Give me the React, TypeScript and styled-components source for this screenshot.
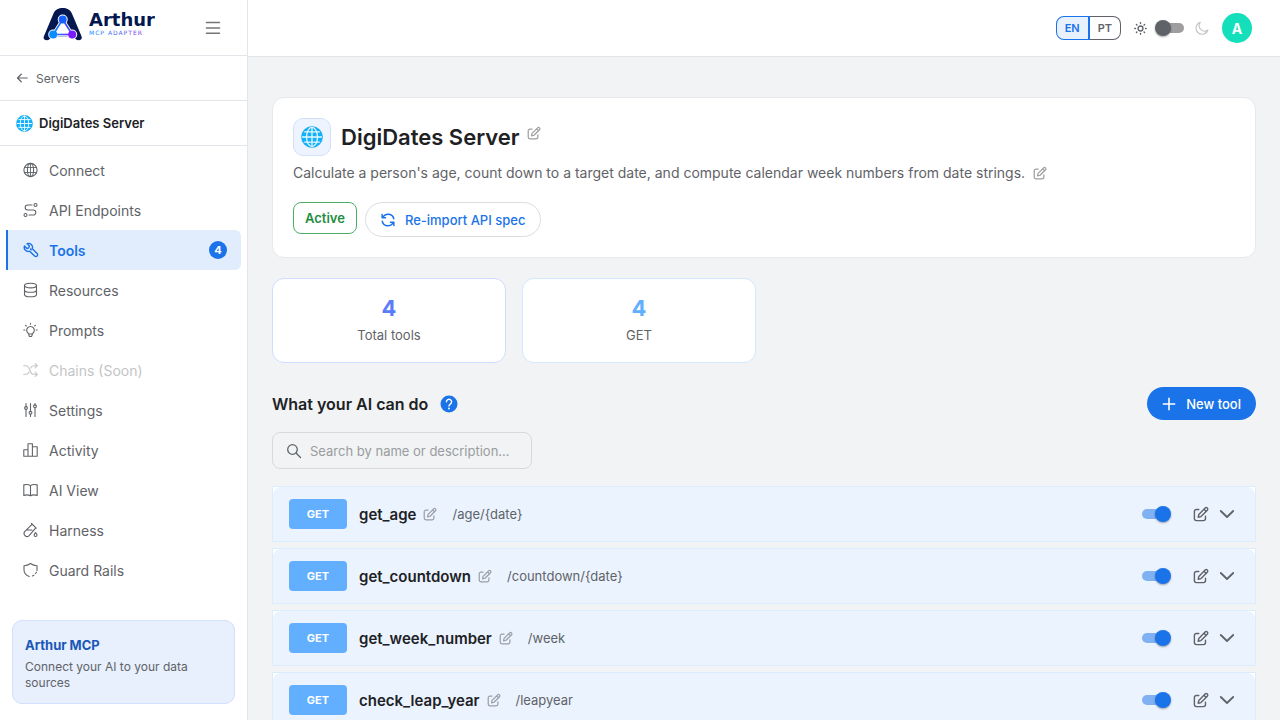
import React, { useState } from "react";
import styled, { createGlobalStyle, css } from "styled-components";

const GlobalStyle = createGlobalStyle`
  *, *::before, *::after { box-sizing: border-box; }
  body {
    margin: 0;
    background: #f1f3f4;
    color: #202124;
    font-family: Inter, "Liberation Sans", sans-serif;
    font-size: 14px;
  }
  h1, h2, p, ul { margin: 0; padding: 0; }
  ul { list-style: none; }
  button, input { font-family: inherit; }
  button { cursor: pointer; }
`;

/* ---------- icons ---------- */

type IconProps = { size?: number; stroke?: number; children?: React.ReactNode };

const Glyph = styled.svg`
  display: block;
  flex: none;
  fill: none;
  stroke: currentColor;
  stroke-linecap: round;
  stroke-linejoin: round;
`;

const Icon = ({ size = 16, stroke = 1.1, children }: IconProps) => (
  <Glyph width={size} height={size} viewBox="0 0 16 16" strokeWidth={stroke} aria-hidden="true">
    {children}
  </Glyph>
);

const ConnectIcon = () => (
  <Icon>
    <circle cx="7.500" cy="8" r="6.600" />
    <ellipse cx="7.500" cy="8" rx="3.100" ry="6.600" />
    <path d="M7.500 1.400v13.200M1.600 5.500h11.800M1.600 10.500h11.800" strokeWidth="0.900" />
  </Icon>
);
const EndpointsIcon = () => (
  <Icon>
    <circle cx="12.500" cy="3" r="1.500" />
    <circle cx="2.500" cy="13" r="1.500" />
    <path d="M9 3H4.700a2.500 2.500 0 0 0 0 5h5.600a2.500 2.500 0 0 1 0 5H6" />
  </Icon>
);
const ToolsIcon = () => (
  <Icon stroke={1.400}>
    <path d="M9.300 6.700a4 4 0 0 0-5.200-5L6.400 4 5.800 5.900 3.900 6.500 1.500 4.100a4 4 0 0 0 5.200 5.100l4.900 4.900a1.750 1.750 0 0 0 2.500-2.500Z" />
    <path d="m7.500 7 .800.800" />
  </Icon>
);
const ResourcesIcon = () => (
  <Icon>
    <ellipse cx="7.500" cy="3.600" rx="6" ry="2.300" />
    <path d="M1.500 3.600v8.800c0 1.300 2.700 2.300 6 2.300s6-1 6-2.300V3.600M1.500 8c0 1.300 2.700 2.300 6 2.300s6-1 6-2.300" />
  </Icon>
);
const PromptsIcon = () => (
  <Icon>
    <path d="M5.800 11.700A3.800 3.800 0 1 1 9.200 11.700V13l-.7 1.500h-2L5.800 13ZM6 12h3" />
    <path d="M7.500 1.200v1M.8 8h1M13.200 8h1M2.600 3.300l.7.700M12.400 3.300l-.7.700" />
  </Icon>
);
const ChainsIcon = () => (
  <Icon>
    <path d="M.7 3.700H3c4.500 0 3 8.600 7.500 8.600h3.800M.7 12.300H3c1.700 0 2.600-1 3.200-2.300M7.600 6c.6-1.300 1.500-2.300 3.200-2.300h3.500M12.200 1.600l2.100 2.100-2.100 2.100M12.200 10.200l2.100 2.100-2.100 2.100" />
  </Icon>
);
const SettingsIcon = () => (
  <Icon>
    <circle cx="3" cy="6" r="1.400" />
    <circle cx="7.500" cy="10.800" r="1.400" />
    <circle cx="12" cy="4.300" r="1.400" />
    <path d="M3 1.500v3.100M3 7.400v7M7.500 1.500v7.900M7.500 12.200v2.200M12 1.500v1.400M12 5.700v8.700" />
  </Icon>
);
const ActivityIcon = () => (
  <Icon>
    <path d="M.8 14.200V7.700h4.200v6.500ZM5 14.200V1.800h4.400v12.400ZM9.400 4.800h4.800v9.400H5" />
  </Icon>
);
const BookIcon = () => (
  <Icon>
    <path d="M7.500 3.700C5.700 2.200 3.300 2.200.8 2.900v10.500c2.500-.7 4.900-.7 6.700.5 1.800-1.200 4.200-1.200 6.700-.5V2.900c-2.500-.7-4.900-.7-6.700.8ZM7.500 3.700v10" />
  </Icon>
);
const HarnessIcon = () => (
  <Icon>
    <path d="m8.500 1.500 4.700 4.700M9.200 2.200 1.700 9.700a3 3 0 0 0 4.200 4.200l6.900-8M4 8h5" />
    <path d="M12.500 10.600c1 1.300 1.500 1.800 1.500 2.500a1.450 1.450 0 0 1-2.900 0c0-.7.500-1.200 1.400-2.500Z" />
  </Icon>
);
const ShieldIcon = () => (
  <Icon>
    <path d="M14 8.500V3.700C11.800 3.700 9.500 3 7.500 1.500 5.500 3 3.200 3.700 1 3.700v4.100c0 3.600 2.300 5.700 5.200 6.800M9.500 14l1.500-.9M12.500 11.500l.9-1.300" />
  </Icon>
);
const BackIcon = () => (
  <Icon size={12} stroke={1.600}>
    <path d="M15 8H2M7 3 2 8l5 5" />
  </Icon>
);
const MenuIcon = () => (
  <Icon stroke={1.600}>
    <path d="M1.500 2.500h13M1.500 8h13M1.500 13.200h13" />
  </Icon>
);
const EditIcon = ({ size = 14, stroke = 1.400 }: IconProps) => (
  <Icon size={size} stroke={stroke}>
    <path d="M5.800 3.500H3.400a2 2 0 0 0-2 2v7.100a2 2 0 0 0 2 2h7.100a2 2 0 0 0 2-2v-2.400" />
    <path d="m5.800 8.500 6.300-6.400a1.550 1.550 0 0 1 2.200 2.200L8 10.600l-2.800.6ZM11 3.300l2.200 2.200" />
  </Icon>
);
const SyncIcon = () => (
  <Icon size={14} stroke={1.700}>
    <path d="M14.600 6.500A6.700 6.700 0 0 0 2.900 3.800L1.300 5.500M1.300 1.600v3.900h3.900M1.400 9.500a6.700 6.700 0 0 0 11.700 2.700l1.600-1.700M14.700 14.400v-3.900h-3.900" />
  </Icon>
);
const SunIcon = () => (
  <Icon size={13} stroke={1.700}>
    <circle cx="8" cy="8" r="3" />
    <path d="M8 1v.8M8 14.200v.8M1 8h.8M14.200 8h.8M3 3l.6.600M12.400 12.400l.6.600M13 3l-.6.600M3.600 12.400l-.6.600" />
  </Icon>
);
const MoonIcon = () => (
  <Icon size={14} stroke={1.300}>
    <path d="M6 1.500a7 7 0 1 0 8.800 8.800A6.300 6.300 0 0 1 6 1.500Z" />
  </Icon>
);
const PlusIcon = () => (
  <Icon size={14} stroke={1.800}>
    <path d="M8 1.500v13M1.500 8h13" />
  </Icon>
);
const SearchIcon = () => (
  <Icon stroke={1.300}>
    <circle cx="6.500" cy="6.500" r="4.800" />
    <path d="m10.200 10.200 4.300 4.300" />
  </Icon>
);
const ChevronIcon = () => (
  <Icon stroke={1.800}>
    <path d="m1.800 5 6.200 6 6.200-6" />
  </Icon>
);
const HelpIcon = () => (
  <Glyph width="18" height="18" viewBox="0 0 18 18" aria-hidden="true">
    <circle cx="9" cy="9" r="8.500" fill="#1a73e8" stroke="none" />
    <path d="M6.400 6.800a2.600 2.600 0 1 1 3.900 2.300C9.400 9.700 9 10 9 11" stroke="#fff" strokeWidth="1.400" />
    <circle cx="9" cy="13.500" r="0.900" fill="#fff" stroke="none" />
  </Glyph>
);
const GlobeBadge = ({ size }: { size: number }) => (
  <Glyph width={size} height={size} viewBox="0 0 24 24" strokeWidth="1.400" aria-hidden="true">
    <circle cx="12" cy="12" r="11.500" fill="#12b0f8" stroke="#12a6f0" strokeWidth="0.600" />
    <g stroke="#e6f7ff">
      <ellipse cx="12" cy="12" rx="6" ry="10.500" />
      <path d="M12 1.500v21M1.500 12h21M4 6.500h16M4 17.500h16" />
    </g>
  </Glyph>
);

const BrandLogo = () => (
  <svg width="112" height="34" viewBox="0 0 112 34" role="img" aria-label="Arthur MCP Adapter">
    <defs>
      <linearGradient id="tagline" x1="0" x2="1" y1="0" y2="0">
        <stop offset="0" stopColor="#1496ff" />
        <stop offset="1" stopColor="#7a3cf0" />
      </linearGradient>
      <linearGradient id="base" x1="0" x2="1" y1="0" y2="0">
        <stop offset="0" stopColor="#0a8cff" />
        <stop offset="1" stopColor="#7a1cff" />
      </linearGradient>
    </defs>
    <path
      d="M1 29 10.500 6.500C12.500 2.300 15.500 1 19.700 1s7.200 1.300 9.200 5.500L38.400 29c1.200 3-.4 4.200-2.600 4.200-2.300 0-3.200-.8-4.600-3.200H8.200c-1.400 2.400-2.300 3.200-4.600 3.200C1.400 33.200-.2 32 1 29Z"
      fill="#04174f"
    />
    <path d="M19.700 13.500 11 27.500h17.400Z" fill="#fff" stroke="#fff" strokeWidth="4.500" strokeLinejoin="round" />
    <circle cx="19.700" cy="12.500" r="5" fill="#fff" />
    <circle cx="10.200" cy="27.500" r="5" fill="#fff" />
    <circle cx="29.200" cy="27.500" r="5" fill="#fff" />
    <path d="M10 30h19.400v4H10Z" fill="#fff" />
    <path d="M19.700 12.500 10.200 27.500" stroke="#1477ff" strokeWidth="1.600" />
    <path d="m19.700 12.500 9.500 15" stroke="#3a4cff" strokeWidth="1.600" />
    <rect x="10" y="26.700" width="19" height="1.600" fill="url(#base)" />
    <circle cx="19.700" cy="12.500" r="4" fill="#1560ff" />
    <circle cx="10.200" cy="27.500" r="4" fill="#0a8cff" />
    <circle cx="29.200" cy="27.500" r="4" fill="#7a1cff" />
    <text x="46" y="19" fontFamily="'DejaVu Sans', sans-serif" fontWeight="700" fontSize="18" fill="#04174f">
      Arthur
    </text>
    <text x="46" y="28" fontFamily="'DejaVu Sans', sans-serif" fontSize="6" letterSpacing="1" fill="url(#tagline)">
      MCP ADAPTER
    </text>
  </svg>
);

/* ---------- shared controls ---------- */

const IconButton = styled.button<{ $tone?: string }>`
  display: flex;
  align-items: center;
  justify-content: center;
  padding: 0;
  border: 0;
  background: none;
  color: ${(p) => p.$tone ?? "#5f6368"};
`;

const Switch = styled.input`
  appearance: none;
  display: flex;
  align-items: center;
  flex: none;
  width: 27px;
  height: 10px;
  margin: 0 0 0 2px;
  cursor: pointer;
  border-radius: 5px;
  background: #9e9e9e;

  &::before {
    content: "";
    flex: none;
    width: 16px;
    height: 16px;
    margin: -3px -2px;
    border-radius: 50%;
    background: #5f6368;
    box-shadow: 0 1px 2px rgba(0, 0, 0, 0.35);
  }
  &:checked {
    justify-content: flex-end;
    margin: 0 2px 0 0;
    background: #80b1f3;
  }
  &:checked::before {
    background: #1a73e8;
  }
`;

/* ---------- shell ---------- */

const Shell = styled.div`
  display: grid;
  grid-template-columns: 248px minmax(0, 1fr);
  height: 100vh;
`;

const Sidebar = styled.aside`
  display: flex;
  flex-direction: column;
  min-height: 0;
  background: #fff;
  border-right: 1px solid #e3e5ea;
`;

const SideRow = styled.div<{ $height: number }>`
  display: flex;
  align-items: center;
  flex: none;
  height: ${(p) => p.$height}px;
  padding: 0 16px;
  border-bottom: 1px solid #e3e5ea;
`;

const Brand = styled(SideRow)`
  justify-content: space-between;
  padding: 0 26px 8px 43px;

  button { margin-top: 8px; }
`;

const BackLink = styled.a`
  display: flex;
  align-items: center;
  gap: 8px;
  color: #5f6368;
  font-size: 12px;
  text-decoration: none;
`;

const ServerName = styled(SideRow)`
  gap: 6px;
  font-size: 13px;
  font-weight: 600;
`;

const NavList = styled.ul`
  flex: 1;
  padding: 4px 6px;
`;

const NavLink = styled.a<{ $active?: boolean; $disabled?: boolean }>`
  display: flex;
  align-items: center;
  gap: 10px;
  height: 40px;
  padding: 0 14px 0 15px;
  border-left: 2px solid transparent;
  border-radius: 0 6px 6px 0;
  color: #5f6368;
  text-decoration: none;
  ${(p) => p.$disabled && css`color: #c3c5c7;`}
  ${(p) => p.$active && css`
    color: #1a73e8;
    font-weight: 600;
    background: #e1edfc;
    border-left-color: #1a73e8;
  `}
`;

const Count = styled.span`
  display: grid;
  place-items: center;
  width: 18px;
  height: 18px;
  margin-left: auto;
  border-radius: 50%;
  background: #1a73e8;
  color: #fff;
  font-size: 11px;
  font-weight: 700;
`;

const Promo = styled.section`
  margin: 0 12px 16px;
  padding: 15px 12px 12px;
  border: 1px solid #d2e0fd;
  border-radius: 10px;
  background: #e8effd;
  color: #5f6368;
  font-size: 12px;
  line-height: 16px;

  h2 {
    margin-bottom: 5px;
    color: #1a56b8;
    font-size: 13px;
    line-height: 18px;
    font-weight: 700;
  }
`;

const Content = styled.div`
  display: flex;
  flex-direction: column;
  min-width: 0;
  min-height: 0;
`;

const TopBar = styled.header`
  display: flex;
  align-items: center;
  justify-content: flex-end;
  flex: none;
  height: 57px;
  padding: 0 28px;
  background: #fff;
  border-bottom: 1px solid #e3e5ea;
`;

const LangGroup = styled.div`
  display: flex;
  margin-right: 13px;
`;

const LangButton = styled.button<{ $selected?: boolean }>`
  height: 24px;
  padding: 0 8px;
  border: 1px solid #5f6368;
  border-left-width: 0;
  border-radius: 0 8px 8px 0;
  background: #fff;
  color: #5f6368;
  font-size: 11px;
  font-weight: 600;
  ${(p) => p.$selected && css`
    border: 1px solid #1a73e8;
    border-right-width: 2px;
    border-radius: 8px 0 0 8px;
    background: #e8f1fe;
    color: #1a73e8;
  `}
`;

const ThemePicker = styled.div`
  display: flex;
  align-items: center;
  gap: 8px;
  margin-right: 13px;
  color: #5f6368;

  > :last-child { color: #c3c5c7; margin-left: 3px; }
`;

const Avatar = styled.button`
  width: 30px;
  height: 30px;
  padding: 0;
  border: 0;
  border-radius: 50%;
  background: #14dfbb;
  color: #fff;
  font-size: 14px;
  font-weight: 700;
`;

const Main = styled.main`
  flex: 1;
  min-height: 0;
  padding: 40px 24px 24px;
  overflow-y: auto;
  scrollbar-width: none;
`;

/* ---------- server summary ---------- */

const Summary = styled.section`
  padding: 20px;
  border: 1px solid #e6e8eb;
  border-radius: 12px;
  background: #fff;
`;

const TitleRow = styled.div`
  display: flex;
  align-items: center;
  gap: 10px;

  h1 {
    font-size: 22px;
    line-height: 30px;
    font-weight: 600;
  }
  button { align-self: flex-start; margin: 8px 0 0 -3px; }
`;

const ServerMark = styled.div`
  display: grid;
  place-items: center;
  width: 38px;
  height: 38px;
  border: 1px solid #d3e0fd;
  border-radius: 10px;
  background: #edf3ff;
`;

const Description = styled.div`
  display: flex;
  align-items: center;
  gap: 8px;
  margin: 5px 0 17px;
  color: #5f6368;
  font-size: 14px;
  line-height: 24px;
`;

const Actions = styled.div`
  display: flex;
  align-items: flex-start;
  gap: 8px;
`;

const StatusButton = styled.button`
  height: 32px;
  padding: 0 11px;
  border: 1px solid #4caf68;
  border-radius: 8px;
  background: #fff;
  color: #1e8e3e;
  font-size: 13px;
  font-weight: 600;
`;

const PillButton = styled.button<{ $primary?: boolean }>`
  display: flex;
  align-items: center;
  gap: 10px;
  height: ${(p) => (p.$primary ? 33 : 35)}px;
  padding: 0 15px;
  border: ${(p) => (p.$primary ? "0" : "1px solid #dadce0")};
  border-radius: 18px;
  background: ${(p) => (p.$primary ? "#1a73e8" : "#fff")};
  color: ${(p) => (p.$primary ? "#fff" : "#1a73e8")};
  font-size: 13px;
  font-weight: 500;
`;

/* ---------- stats ---------- */

const Stats = styled.div`
  display: grid;
  grid-template-columns: repeat(4, minmax(0, 1fr));
  gap: 16px;
  margin: 20px 0 24px;
`;

const Stat = styled.div<{ $line: string; $ink: string }>`
  padding: 14px 16px 16px;
  border: 1px solid ${(p) => p.$line};
  border-radius: 12px;
  background: #fff;
  color: #5f6368;
  font-size: 13px;
  line-height: 22px;
  text-align: center;

  strong {
    display: block;
    color: ${(p) => p.$ink};
    font-size: 22px;
    line-height: 31px;
    font-weight: 700;
  }
`;

/* ---------- tools ---------- */

const SectionHead = styled.div`
  display: flex;
  align-items: center;
  gap: 12px;

  h2 {
    font-size: 16px;
    font-weight: 600;
  }
  > :last-child { margin-left: auto; }
`;

const SearchBox = styled.label`
  display: flex;
  align-items: center;
  gap: 8px;
  width: 260px;
  height: 37px;
  margin: 12px 0 17px;
  padding: 0 12px 0 13px;
  border: 1px solid #d7d9dc;
  border-radius: 8px;
  color: #5f6368;

  input {
    flex: 1;
    min-width: 0;
    padding: 0;
    border: 0;
    outline: 0;
    background: none;
    color: #202124;
    font-size: 13px;
    text-overflow: ellipsis;
  }
  input::placeholder { color: #9a9c9f; opacity: 1; }
`;

const ToolList = styled.ul`
  display: grid;
  gap: 6px;
`;

const ToolFrame = styled.li`
  border: 1px solid #dcecff;
  background: #fff;
`;

const ToolRow = styled.div`
  display: flex;
  align-items: center;
  height: 54px;
  padding: 0 20px 0 16px;
  border-radius: 8px 8px 0 0;
  background: #ebf3ff;
`;

const Method = styled.span`
  display: grid;
  place-items: center;
  width: 58px;
  height: 30px;
  margin-right: 12px;
  border-radius: 4px;
  background: #61affe;
  color: #fff;
  font-size: 11px;
  font-weight: 700;
`;

const ToolName = styled.span`
  margin-right: 7px;
  font-size: 15px;
  font-weight: 600;
`;

const ToolPath = styled.span`
  margin-left: 15px;
  color: #5f6368;
  font-size: 13px;
`;

const RowControls = styled.div`
  display: flex;
  align-items: center;
  gap: 10px;
  margin-left: auto;

  input:checked { margin-right: 14px; }
  input:not(:checked) { margin-right: 12px; }
`;

const navItems = [
  { label: "Connect", icon: <ConnectIcon /> },
  { label: "API Endpoints", icon: <EndpointsIcon /> },
  { label: "Tools", icon: <ToolsIcon />, active: true, count: 4 },
  { label: "Resources", icon: <ResourcesIcon /> },
  { label: "Prompts", icon: <PromptsIcon /> },
  { label: "Chains (Soon)", icon: <ChainsIcon />, disabled: true },
  { label: "Settings", icon: <SettingsIcon /> },
  { label: "Activity", icon: <ActivityIcon /> },
  { label: "AI View", icon: <BookIcon /> },
  { label: "Harness", icon: <HarnessIcon /> },
  { label: "Guard Rails", icon: <ShieldIcon /> },
];

const tools = [
  { name: "get_age", path: "/age/{date}" },
  { name: "get_countdown", path: "/countdown/{date}" },
  { name: "get_week_number", path: "/week" },
  { name: "check_leap_year", path: "/leapyear" },
];

export default function App() {
  const [dark, setDark] = useState(false);
  const [query, setQuery] = useState("");
  const visible = tools.filter((t) => t.name.includes(query.toLowerCase()));

  return (
    <>
      <GlobalStyle />
      <Shell>
        <Sidebar>
          <Brand $height={56}>
            <BrandLogo />
            <IconButton aria-label="Collapse menu" $tone="#757575"><MenuIcon /></IconButton>
          </Brand>
          <SideRow $height={45}>
            <BackLink href="#servers"><BackIcon />Servers</BackLink>
          </SideRow>
          <ServerName $height={45}><GlobeBadge size={17} />DigiDates Server</ServerName>
          <NavList>
            {navItems.map((item) => (
              <li key={item.label}>
                <NavLink href="#" $active={item.active} $disabled={item.disabled} aria-disabled={item.disabled}>
                  {item.icon}
                  {item.label}
                  {item.count && <Count>{item.count}</Count>}
                </NavLink>
              </li>
            ))}
          </NavList>
          <Promo>
            <h2>Arthur MCP</h2>
            <p>Connect your AI to your data sources</p>
          </Promo>
        </Sidebar>

        <Content>
          <TopBar>
            <LangGroup role="group" aria-label="Language">
              <LangButton $selected aria-pressed="true">EN</LangButton>
              <LangButton aria-pressed="false">PT</LangButton>
            </LangGroup>
            <ThemePicker>
              <SunIcon />
              <Switch type="checkbox" aria-label="Dark theme" checked={dark} onChange={() => setDark(!dark)} />
              <MoonIcon />
            </ThemePicker>
            <Avatar aria-label="Account A">A</Avatar>
          </TopBar>

          <Main>
            <Summary>
              <TitleRow>
                <ServerMark><GlobeBadge size={22} /></ServerMark>
                <h1>DigiDates Server</h1>
                <IconButton aria-label="Edit name" $tone="#9e9e9e"><EditIcon /></IconButton>
              </TitleRow>
              <Description>
                <p>Calculate a person's age, count down to a target date, and compute calendar week numbers from date strings.</p>
                <IconButton aria-label="Edit description" $tone="#9e9e9e"><EditIcon /></IconButton>
              </Description>
              <Actions>
                <StatusButton>Active</StatusButton>
                <PillButton><SyncIcon />Re-import API spec</PillButton>
              </Actions>
            </Summary>

            <Stats>
              <Stat $line="#d0dcff" $ink="#5b7cfa"><strong>4</strong>Total tools</Stat>
              <Stat $line="#d3e8ff" $ink="#61affe"><strong>4</strong>GET</Stat>
            </Stats>

            <SectionHead>
              <h2>What your AI can do</h2>
              <IconButton aria-label="Help"><HelpIcon /></IconButton>
              <PillButton $primary><PlusIcon />New tool</PillButton>
            </SectionHead>

            <SearchBox>
              <SearchIcon />
              <input
                type="text"
                aria-label="Search tools"
                placeholder="Search by name or description…"
                value={query}
                onChange={(e) => setQuery(e.target.value)}
              />
            </SearchBox>

            <ToolList>
              {visible.map((tool) => (
                <ToolFrame key={tool.name}>
                  <ToolRow>
                    <Method>GET</Method>
                    <ToolName>{tool.name}</ToolName>
                    <IconButton aria-label={`Rename ${tool.name}`} $tone="#9a9fa6"><EditIcon /></IconButton>
                    <ToolPath>{tool.path}</ToolPath>
                    <RowControls>
                      <Switch type="checkbox" defaultChecked aria-label={`Enable ${tool.name}`} />
                      <IconButton aria-label={`Edit ${tool.name}`}><EditIcon size={16} stroke={1.400} /></IconButton>
                      <IconButton aria-label={`Expand ${tool.name}`}><ChevronIcon /></IconButton>
                    </RowControls>
                  </ToolRow>
                </ToolFrame>
              ))}
            </ToolList>
          </Main>
        </Content>
      </Shell>
    </>
  );
}
